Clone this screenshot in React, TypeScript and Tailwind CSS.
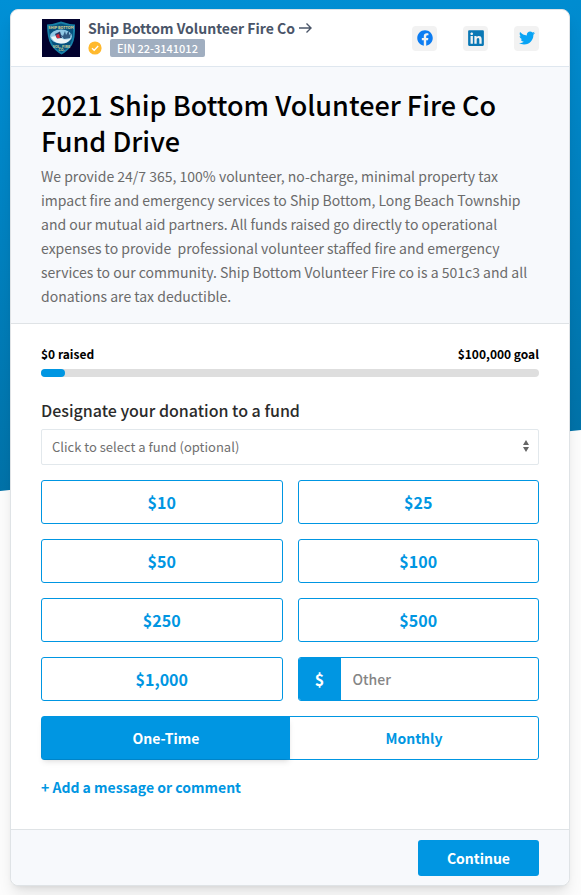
import React, { useState } from 'react';
import { FaFacebook, FaLinkedin, FaTwitter } from 'react-icons/fa';

const AMOUNTS = ['$10', '$25', '$50', '$100', '$250', '$500', '$1,000'];

const FREQUENCIES = ['One-Time', 'Monthly'];

const SOCIAL_LINKS = [
  { label: 'Facebook', icon: <FaFacebook className="h-4 w-4 text-[#0d7df2]" /> },
  { label: 'LinkedIn', icon: <FaLinkedin className="h-[18px] w-4 text-[#0a78b5]" /> },
  { label: 'Twitter', icon: <FaTwitter className="h-4 w-4 text-[#08a4f5]" /> },
];

const OrganizationBadge: React.FC = () => (
  <svg viewBox="0 0 38 38" className="h-10 w-10 shrink-0 p-px" role="img" aria-label="Ship Bottom Volunteer Fire Co">
    <rect width="38" height="38" fill="#02022e" />
    <path d="M5 5.500Q12 5 19 2.500Q26 5 33 5.500Q33.500 20 30 26Q26 32 19.500 35.500Q13 32 9 26Q5 19 5 5.500Z" fill="#1680a8" />
    <path d="M7 7Q13 6.500 19 4.500Q25 6.500 31 7Q31.500 19 28.500 25Q25 30.500 19.500 33.500Q14 30.500 10.500 25Q7 18 7 7Z" fill="#06527f" />
    <text x="19" y="9.500" textAnchor="middle" fontSize="3.700" fontWeight="700" fill="#e3dc92">SHIP BOTTOM</text>
    <ellipse cx="19" cy="17.500" rx="11" ry="7" fill="#8fc8e5" />
    <path d="M9 18Q14 16 19 19T29 19Q26 25 19 24.500Q12 24 9 18Z" fill="#eef5f7" />
    <path d="M13 15L18 12.500L20 19L15 19.500Z" fill="#26345f" />
    <path d="M14 16L17 15L18 19H15Z" fill="#d52c3e" />
    <path d="M18 15L21 17L23 12L24 16L27 11L27 16L29 14L28 19L22 20Z" fill="#315b83" />
    <text x="19.500" y="28.500" textAnchor="middle" fontSize="3.700" fontWeight="700" fill="#cfd29b">VOL. FIRE</text>
    <text x="19.500" y="32" textAnchor="middle" fontSize="3.500" fontWeight="700" fill="#cfd29b">CO.</text>
  </svg>
);

const App: React.FC = () => {
  const [amount, setAmount] = useState('');
  const [frequency, setFrequency] = useState('One-Time');

  return (
    <div className="relative min-h-screen overflow-hidden bg-[#fcfcfc] py-[9px] pr-[11px] pl-[10px] font-['Noto_Sans_CJK_SC',sans-serif]">
      {/* Slanted backdrop */}
      <div className="absolute inset-x-0 top-0 h-[491px] origin-top-left -skew-y-6 bg-linear-to-b from-[#0090d6] to-[#0072a8]" />

      <main className="relative rounded-lg border border-[#dfe3e6] bg-white shadow-lg">
        {/* Organization */}
        <header className="flex items-center justify-between border-b border-[#dfe7ef] px-[30px] py-2">
          <div className="flex items-center gap-[7px]">
            <OrganizationBadge />
            <div>
              <a href="#organization" className="flex items-center gap-1 text-[14px] leading-[18px] font-bold text-[#4a5568]">
                Ship Bottom Volunteer Fire Co
                <svg viewBox="0 0 13 12" className="h-3 w-[13px]" fill="none" stroke="currentColor" strokeWidth="1.4">
                  <path d="M0 6H12M7.500 1.500L12 6L7.500 10.500" />
                </svg>
              </a>
              <div className="mt-[2px] flex items-center gap-2">
                <svg viewBox="0 0 14 14" className="h-[14px] w-[14px]" aria-label="Verified">
                  <circle cx="7" cy="7" r="6.600" fill="#ffb92e" />
                  <path d="M4 7.200L6.200 9.300L10.200 5" fill="none" stroke="white" strokeWidth="1.300" />
                </svg>
                <span className="rounded-xs bg-[#a0aec0] px-[7px] text-[11px] leading-[18px] font-medium text-white">
                  EIN 22-3141012
                </span>
              </div>
            </div>
          </div>
          <nav className="flex gap-[26px]">
            {SOCIAL_LINKS.map((link) => (
              <a
                key={link.label}
                href="#share"
                aria-label={link.label}
                className="flex h-[25px] w-[25px] items-center justify-center rounded bg-[#f2f2f2]"
              >
                {link.icon}
              </a>
            ))}
          </nav>
        </header>

        {/* Campaign */}
        <section className="border-b border-[#dfe3e6] bg-[#f7f9fc] px-[30px] pt-5 pb-[15px]">
          <h1 className="text-[27px] leading-9 font-medium text-black">2021 Ship Bottom Volunteer Fire Co Fund Drive</h1>
          <p className="mt-[5px] text-[14px] leading-6 text-[#6b6b6b]">
            We provide 24/7 365, 100% volunteer, no-charge, minimal property tax impact fire and emergency services to
            Ship Bottom, Long Beach Township and our mutual aid partners. All funds raised go directly to operational
            expenses to provide&nbsp; professional volunteer staffed fire and emergency services to our community. Ship
            Bottom Volunteer Fire co is a 501c3 and all donations are tax deductible.
          </p>
        </section>

        <form onSubmit={(e) => e.preventDefault()}>
          <div className="px-[30px] pt-5 pb-[30px]">
            {/* Progress */}
            <div className="flex justify-between text-[12px] leading-5 font-bold text-black">
              <span>$0 raised</span>
              <span>$100,000 goal</span>
            </div>
            <div className="mt-[5px] h-2 rounded-full bg-[#dedede]">
              <div className="h-2 w-6 rounded-full bg-[#0096e2]" />
            </div>

            {/* Fund */}
            <label htmlFor="fund" className="mt-[21px] block text-[16px] leading-6 font-medium text-[#2b2b2b]">
              Designate your donation to a fund
            </label>
            <div className="relative mt-[7px]">
              <select
                id="fund"
                className="block h-9 w-full appearance-none rounded-xs border border-[#e2e8ec] bg-white px-[10px] text-[13px] text-[#707070]"
              >
                <option>Click to select a fund (optional)</option>
              </select>
              <svg viewBox="0 0 6 12" className="pointer-events-none absolute top-[11px] right-[10px] h-3 w-[6px]" fill="#666">
                <path d="M3 0L6 5H0ZM0 7H6L3 12Z" />
              </svg>
            </div>

            {/* Amount */}
            <div className="mt-[15px] grid grid-cols-2 gap-[15px]">
              {AMOUNTS.map((value) => (
                <button
                  key={value}
                  type="button"
                  onClick={() => setAmount(value.replace(/[$,]/g, ''))}
                  className="h-11 rounded-[3px] border border-[#0096e2] bg-white text-[16px] font-bold text-[#0096e2]"
                >
                  {value}
                </button>
              ))}
              <div className="flex h-11 overflow-hidden rounded-[3px] border border-[#0096e2]">
                <label
                  htmlFor="other"
                  className="flex w-[42px] shrink-0 items-center justify-center bg-[#0096e2] text-[16px] font-bold text-white"
                >
                  $
                </label>
                <input
                  id="other"
                  type="text"
                  value={amount}
                  onChange={(e) => setAmount(e.target.value)}
                  placeholder="Other"
                  className="w-full min-w-0 px-3 text-[14px] font-medium outline-none placeholder:text-[#858585]"
                />
              </div>
            </div>

            {/* Frequency */}
            <div className="mt-[15px] flex h-11 rounded-[3px] border border-[#0096e2]">
              {FREQUENCIES.map((value) => (
                <button
                  key={value}
                  type="button"
                  onClick={() => setFrequency(value)}
                  className={`flex-1 text-[14px] font-bold ${
                    frequency === value ? 'bg-[#0096e2] text-white shadow-md' : 'text-[#0096e2]'
                  }`}
                >
                  {value}
                </button>
              ))}
            </div>

            <button type="button" className="mt-[15px] block text-[14px] leading-6 font-bold text-[#0096e2]">
              + Add a message or comment
            </button>
          </div>

          <footer className="flex justify-end rounded-b-lg border-t border-[#dfe3e6] bg-[#f7f9fc] px-[30px] pt-[10px] pb-[9px]">
            <button type="submit" className="h-9 rounded-[3px] bg-[#0096e2] px-[29px] text-[14px] font-bold text-white">
              Continue
            </button>
          </footer>
        </form>
      </main>
    </div>
  );
};

export default App;
